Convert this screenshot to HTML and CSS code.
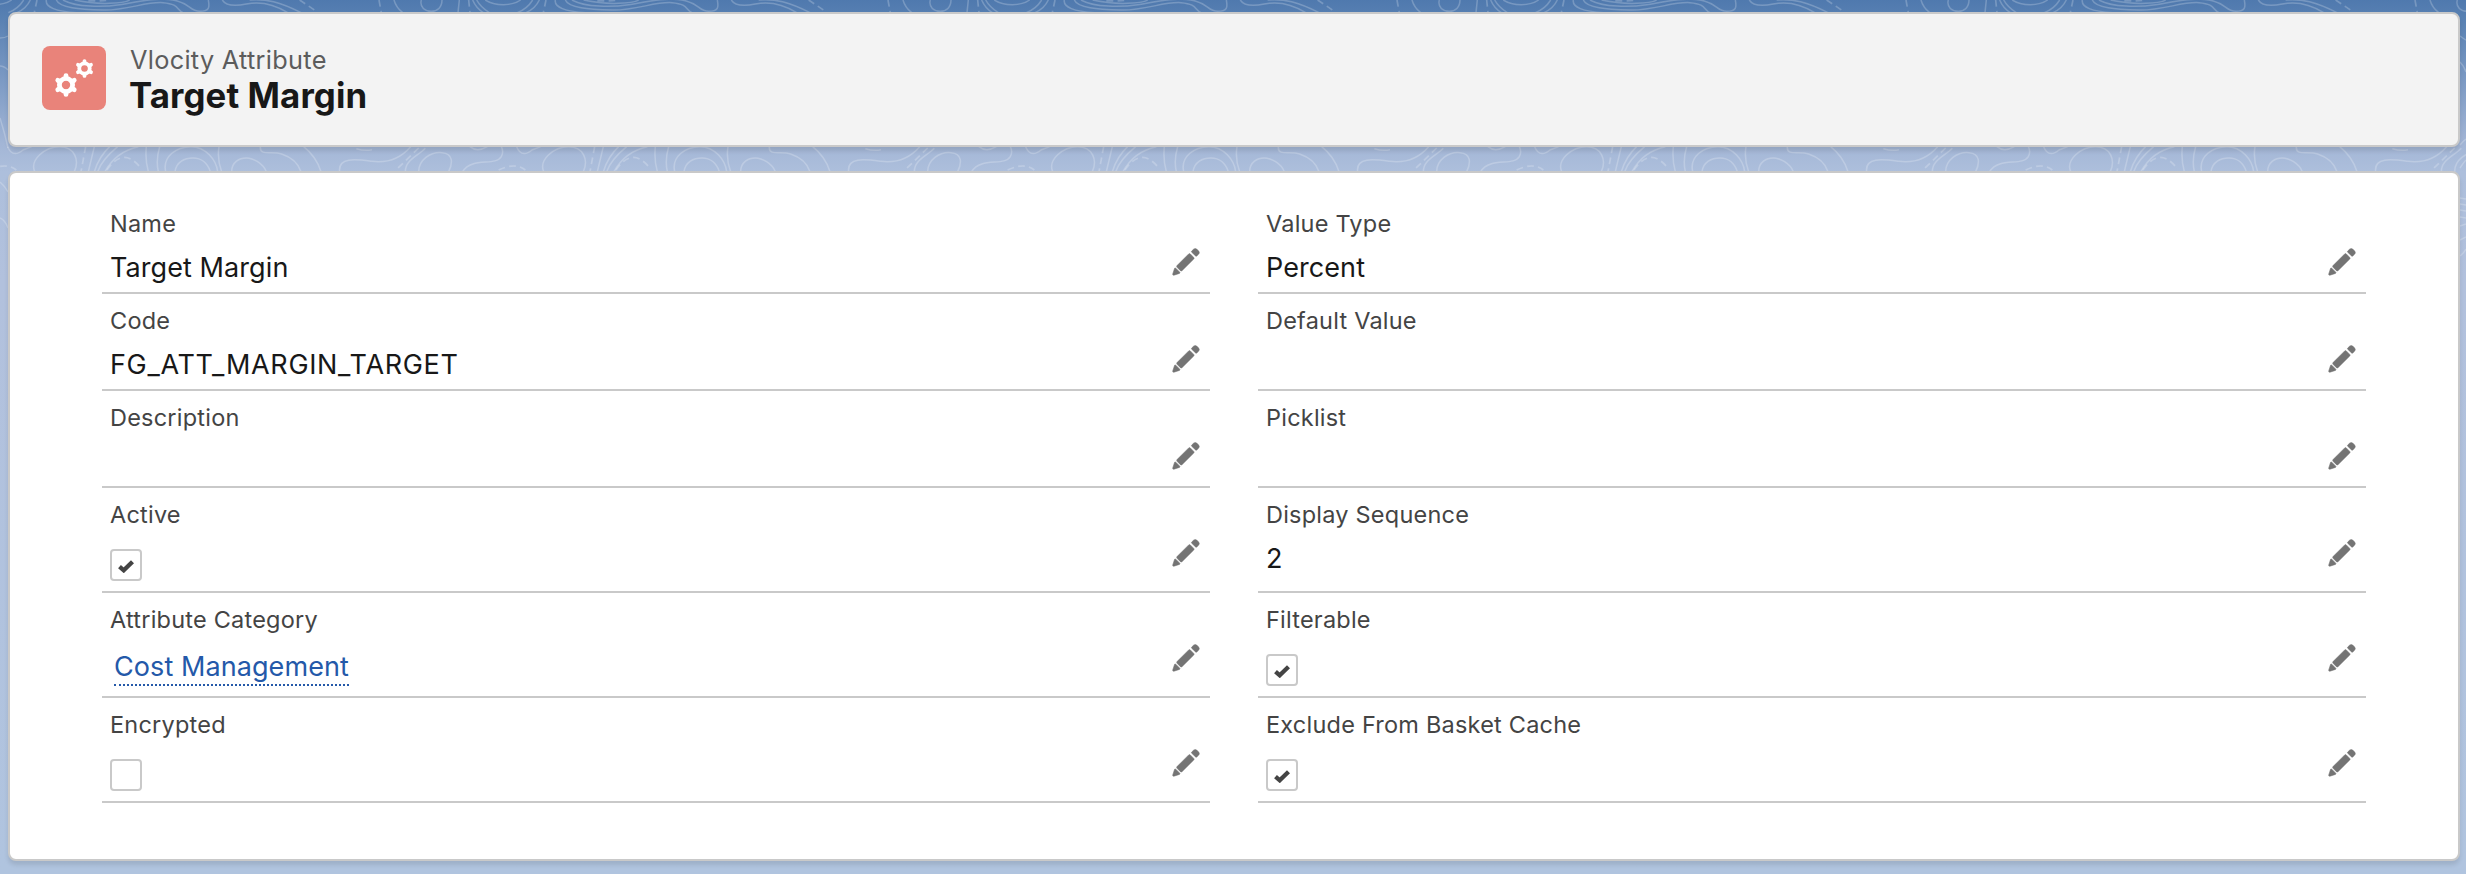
FILE: index.html
```html
<!DOCTYPE html>
<html lang="en">
<head>
<meta charset="utf-8">
<title>Target Margin | Vlocity Attribute</title>
<link rel="stylesheet" href="styles.css">
</head>
<body>
<svg class="backdrop" width="2466" height="874" viewBox="0 0 2466 874" aria-hidden="true">
  <defs>
    <pattern id="contours" width="1527" height="2700" patternUnits="userSpaceOnUse" patternTransform="translate(372 0) scale(.33333)">
      <g class="contour">
        <path d="M66 0Q72 22 92 38M148 0C142 22 160 34 178 34S210 22 210 0M262 0L258 38M302 0Q312 24 334 38M314 0Q326 22 352 38M340 0Q362 14 394 14T446 0M502 0Q490 26 462 38M482 0Q466 26 436 38"/>
        <path d="M550 0C546 22 580 34 640 38M580 0C590 24 650 28 720 30S850 4 900 8S940 30 960 38M600 0C640 22 720 22 770 14S880-8 930 0S980 34 1010 34S1040 22 1036 0M635 0Q690 12 740 10T800 0"/>
        <path d="M1078 0C1090 20 1120 18 1150 12S1220 4 1274 38M1160 0C1210-4 1250 6 1314 38"/>
        <path class="dashed" d="M21 0L28 38M290 0L294 38M522 0L514 38M676 2Q710 4 740 0M1310 0L1360 34"/>
        <path d="M0 484C50 490 90 470 116 440M100 515C100 480 135 470 160 445M140 515C140 480 175 455 210 458S242 490 230 515M294 440Q315 458 346 440M272 515C300 470 370 500 388 470Q396 456 388 440M434 440C446 470 466 462 480 450L506 440M515 515C500 480 545 440 590 440S650 480 634 515"/>
        <path d="M694 440L676 515M740 440Q708 470 694 515M764 440Q716 480 704 515M826 440Q758 455 726 515M850 440Q846 480 856 515M890 440Q878 480 886 515M908 515C898 470 940 440 984 440S1060 480 1064 515M936 515C940 485 965 474 990 474S1034 490 1042 515M1068 440Q1062 480 1076 515M1106 515C1106 485 1130 474 1150 474S1200 490 1210 515M1192 440C1190 470 1226 452 1256 462S1306 490 1314 515M1322 440Q1360 470 1374 515M1430 515C1424 470 1480 478 1527 484M1480 446Q1510 456 1540 446"/>
        <path class="dashed" d="M140 444L72 510M380 510Q430 486 460 510M668 440L654 515M732 510Q780 440 830 500"/>
      </g>
    </pattern>
  </defs>
  <rect width="2466" height="172" fill="url(#contours)"/>
  <g class="contour contour-edge">
    <path d="M0 38Q5 38 8 36M0 66Q4 66 8 70M0 118Q5 134 8 148M0 182Q5 186 8 192M0 218Q5 220 8 228M2460 36Q2464 39 2466 40M2460 62Q2464 66 2466 72M2460 145Q2463 141 2466 139M2460 168Q2464 162 2466 160M2460 198L2466 199M2460 204L2466 205M2460 210L2466 211M2460 217L2466 218M2460 226L2466 224M2460 240L2466 237M2460 256Q2464 253 2466 249"/>
  </g>
</svg>

<svg class="symbols" aria-hidden="true">
  <symbol id="gear" viewBox="-12 -12 24 24">
    <circle r="6.6" fill="none" stroke="currentColor" stroke-width="4.8"/>
    <g stroke="currentColor" stroke-width="4.8" stroke-linecap="round">
      <path d="M0-7V-9.4M0 7V9.4M6.1-3.5L8.2-4.7M6.1 3.5L8.2 4.7M-6.1-3.5L-8.2-4.7M-6.1 3.5L-8.2 4.7"/>
    </g>
  </symbol>
  <symbol id="pencil" viewBox="0 0 28 28">
    <path d="M5 17.6L16.700 5.900Q17.500 5.200 18.300 5.900L21.800 9.400Q22.500 10.200 21.800 11L10 22.700Q9.200 23.400 8.400 22.700L5 19.300Q4.300 18.400 5 17.600ZM19.700 3L21.800 1Q23.300 0 24.700 1L26.700 3.100Q27.900 4.600 26.800 6L24.900 7.900Q24.200 8.500 23.500 7.900L19.700 4.300Q19.200 3.600 19.700 3ZM2.600 20.200Q3.200 19.600 3.800 20.200L7.800 24.200Q8.300 25 7.500 25.400L2 27.200Q.5 27.500 .7 26Z"/>
  </symbol>
  <symbol id="check" viewBox="0 0 16 14">
    <path d="M1.500 7.700L5.700 11.300L14.500 2.700" fill="none" stroke="currentColor" stroke-width="4.300"/>
  </symbol>
</svg>

<main class="page">
  <header class="card page-header">
    <span class="object-icon">
      <svg class="gear-small"><use href="#gear"/></svg>
      <svg class="gear-large"><use href="#gear"/></svg>
    </span>
    <div class="heading">
      <p class="object-name">Vlocity Attribute</p>
      <h1 class="record-name">Target Margin</h1>
    </div>
  </header>

  <section class="card details">
    <div class="field"><span class="label">Name</span><span class="value">Target Margin</span><svg class="edit"><use href="#pencil"/></svg></div>
    <div class="field"><span class="label">Value Type</span><span class="value">Percent</span><svg class="edit"><use href="#pencil"/></svg></div>
    <div class="field"><span class="label">Code</span><span class="value value-code">FG_ATT_MARGIN_TARGET</span><svg class="edit"><use href="#pencil"/></svg></div>
    <div class="field"><span class="label">Default Value</span><svg class="edit"><use href="#pencil"/></svg></div>
    <div class="field"><span class="label">Description</span><svg class="edit"><use href="#pencil"/></svg></div>
    <div class="field"><span class="label">Picklist</span><svg class="edit"><use href="#pencil"/></svg></div>
    <div class="field"><span class="label">Active</span><span class="checkbox"><svg class="tick"><use href="#check"/></svg></span><svg class="edit"><use href="#pencil"/></svg></div>
    <div class="field"><span class="label">Display Sequence</span><span class="value">2</span><svg class="edit"><use href="#pencil"/></svg></div>
    <div class="field"><span class="label">Attribute Category</span><a class="value link">Cost Management</a><svg class="edit"><use href="#pencil"/></svg></div>
    <div class="field"><span class="label">Filterable</span><span class="checkbox"><svg class="tick"><use href="#check"/></svg></span><svg class="edit"><use href="#pencil"/></svg></div>
    <div class="field"><span class="label">Encrypted</span><span class="checkbox"></span><svg class="edit"><use href="#pencil"/></svg></div>
    <div class="field"><span class="label">Exclude From Basket Cache</span><span class="checkbox"><svg class="tick"><use href="#check"/></svg></span><svg class="edit"><use href="#pencil"/></svg></div>
  </section>
</main>
</body>
</html>
```
FILE: styles.css
```css
* { box-sizing: border-box; }

body {
  margin: 0;
  height: 874px;
  overflow: hidden;
  font-family: Inter, "Liberation Sans", sans-serif;
  color: #181818;
  background: linear-gradient(#4f79ae 0, #5780b2 16px, #7c9ac4 80px, #a3b6d6 144px, #adbfdc 172px, #b2c1dd 280px, #b0c4df 874px);
}

.backdrop { position: absolute; left: 0; top: 0; }
.contour { fill: none; stroke: #fff; stroke-opacity: .22; stroke-width: 4.5; }
.contour .dashed { stroke-dasharray: 20 13; stroke-width: 5; }
.contour-edge { stroke-width: 1.5; }
.symbols { position: absolute; width: 0; height: 0; }

.page {
  position: relative;
  display: flex;
  flex-direction: column;
  gap: 24px;
  padding: 12px 6px 0 8px;
}

.card {
  border: 2px solid #c9c9c9;
  border-radius: 8px;
  box-shadow: 0 4px 4px rgba(0, 0, 0, .1);
}

.page-header {
  display: flex;
  gap: 24px;
  height: 135px;
  padding: 32px;
  background: #f3f3f3;
}

.object-icon {
  position: relative;
  width: 64px;
  height: 64px;
  border-radius: 8px;
  background: #e9837a;
  color: #fff;
}
.gear-small { position: absolute; left: 33px; top: 13px; width: 19px; height: 19px; }
.gear-large { position: absolute; left: 12px; top: 27px; width: 24px; height: 24px; }

.heading { display: flex; flex-direction: column; }
.object-name { margin: -3px 0 0; font-size: 25.3px; line-height: 34px; letter-spacing: .3px; color: #5c5c5c; }
.record-name { margin: -2px 0 0 -1px; font-size: 34.8px; line-height: 40px; font-weight: 700; letter-spacing: .1px; }

.details {
  display: grid;
  grid-template-columns: 1fr 1fr;
  grid-template-rows: repeat(3, 97px) repeat(3, 105px);
  column-gap: 48px;
  height: 690px;
  padding: 24px 92px 0;
  background: #fff;
}

.field {
  position: relative;
  display: flex;
  flex-direction: column;
  align-items: flex-start;
  padding: 9px 8px 0;
  border-bottom: 2px solid #c9c9c9;
}

.label { font-size: 23.5px; line-height: 36px; letter-spacing: .22px; color: #444; }
.value { margin-top: 6px; font-size: 27px; line-height: 40px; letter-spacing: .08px; }
.value-code { letter-spacing: .67px; }

.link {
  margin: 12px 0 0 4px;
  line-height: 34px;
  color: #2459a9;
  border-bottom: 2px dotted #2459a9;
}

.checkbox {
  display: flex;
  width: 32px;
  height: 32px;
  margin-top: 16px;
  padding: 8px 0 0 6px;
  border: 2px solid #c9c9c9;
  border-radius: 4px;
  background: #fff;
}
.tick { width: 16px; height: 14px; color: #444; }

.edit {
  position: absolute;
  right: 10px;
  top: 51px;
  width: 28px;
  height: 28px;
  fill: #747474;
  stroke: #747474;
  stroke-width: .5px;
}
```
